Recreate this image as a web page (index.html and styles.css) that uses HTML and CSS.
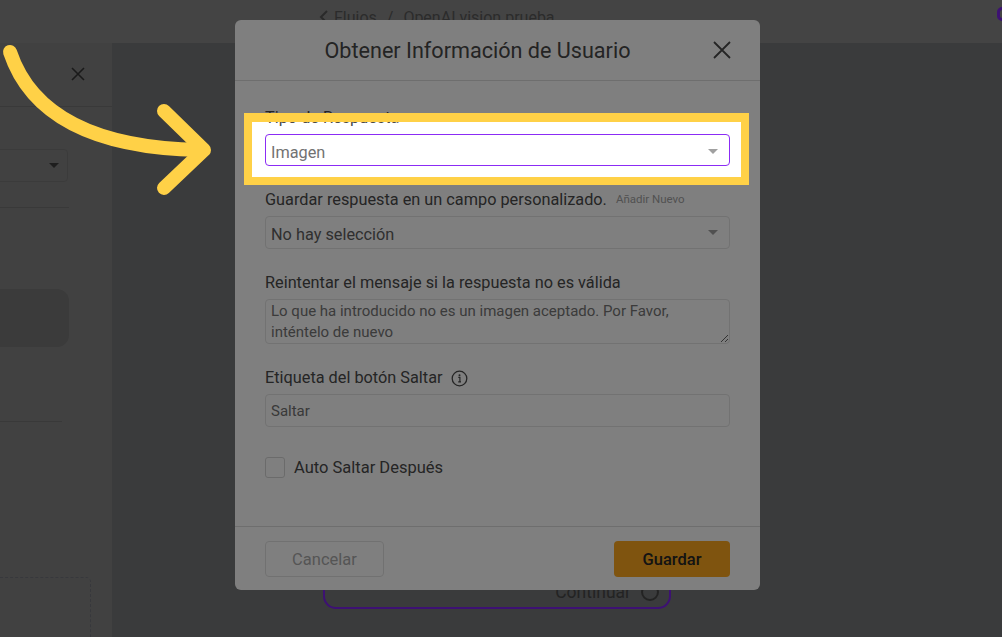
FILE: index.html
```html
<!DOCTYPE html>
<html lang="es">
<head>
<meta charset="utf-8">
<title>Obtener Información de Usuario</title>
<link rel="stylesheet" href="styles.css">
</head>
<body>
<div class="app">
  <header class="topbar">
    <nav class="crumbs">
      <svg class="crumb-back" width="10" height="16" viewBox="0 0 10 16"><path d="M8 2 L2 8 L8 14" fill="none" stroke="#555" stroke-width="2"/></svg>
      <span>Flujos</span>
      <span class="crumb-sep">/</span>
      <span>OpenAI vision prueba</span>
    </nav>
    <span class="top-icon"></span>
  </header>
  <div class="workspace">
    <aside class="panel">
      <div class="panel-head">
        <svg class="panel-close" width="14" height="14" viewBox="0 0 14 14"><path d="M1 1 L13 13 M13 1 L1 13" stroke="#343434" stroke-width="1.6"/></svg>
      </div>
      <div class="panel-select"><span class="caret dark"></span></div>
      <div class="panel-line"></div>
      <div class="panel-card"></div>
      <div class="panel-line short"></div>
      <div class="panel-dashed"></div>
    </aside>
    <main class="canvas">
      <div class="continue-btn">
        <span>Continuar</span>
        <span class="continue-dot"></span>
      </div>
    </main>
  </div>
</div>

<section class="modal">
  <div class="modal-header">
    <h2 class="modal-title">Obtener Información de Usuario</h2>
    <svg class="modal-close" width="18" height="18" viewBox="0 0 18 18"><path d="M1 1 L17 17 M17 1 L1 17" stroke="#4a4a4a" stroke-width="1.8"/></svg>
  </div>
  <div class="modal-body">
    <div class="field">
      <div class="field-label">Tipo de Respuesta</div>
      <div class="control active"><span class="value">Imagen</span><span class="caret"></span></div>
    </div>
    <div class="field">
      <div class="field-label">Guardar respuesta en un campo personalizado.<span class="add-new">Añadir Nuevo</span></div>
      <div class="control"><span class="value dark">No hay selección</span><span class="caret"></span></div>
    </div>
    <div class="field">
      <div class="field-label">Reintentar el mensaje si la respuesta no es válida</div>
      <textarea class="textarea" readonly>Lo que ha introducido no es un imagen aceptado. Por Favor, inténtelo de nuevo</textarea>
    </div>
    <div class="field">
      <div class="field-label">Etiqueta del botón Saltar
        <svg class="info" width="17" height="17" viewBox="0 0 17 17"><circle cx="8.5" cy="8.5" r="7.3" fill="none" stroke="#4a4a4a" stroke-width="1.3"/><circle cx="8.5" cy="5.2" r="1" fill="#4a4a4a"/><path d="M7.3 7.4 H8.9 V11.8 M7.2 11.9 H10" fill="none" stroke="#4a4a4a" stroke-width="1.2"/></svg>
      </div>
      <div class="control"><span class="value small">Saltar</span></div>
    </div>
    <label class="check-row"><span class="checkbox"></span><span>Auto Saltar Después</span></label>
  </div>
  <div class="modal-footer">
    <button class="btn btn-cancel">Cancelar</button>
    <button class="btn btn-save">Guardar</button>
  </div>
</section>

<div class="spotlight"></div>

<svg class="arrow" width="230" height="200" viewBox="0 0 230 200">
  <path d="M10 52 C 30 112, 90 148, 200 150" fill="none" stroke="#ffd147" stroke-width="14" stroke-linecap="round"/>
  <path d="M164 111 L204 150 L164 188" fill="none" stroke="#ffd147" stroke-width="14" stroke-linecap="round" stroke-linejoin="round"/>
</svg>
</body>
</html>
```
FILE: styles.css
```css
* { box-sizing: border-box; }

body {
  margin: 0;
  width: 1002px;
  height: 637px;
  overflow: hidden;
  position: relative;
  background: #747678;
  font-family: Roboto, "Noto Sans", sans-serif;
}

.app {
  display: flex;
  flex-direction: column;
  height: 637px;
}

.topbar {
  height: 43px;
  flex: none;
  background: #888888;
  display: flex;
  justify-content: space-between;
  padding: 5px 0 0 319px;
}

.crumbs {
  display: flex;
  align-items: center;
  height: 24px;
  gap: 5px;
  font-size: 16px;
  color: #575757;
}

.crumb-sep { margin: 0 5px; }

.top-icon {
  width: 10px;
  height: 14px;
  margin-top: 2px;
  margin-right: -5px;
  border: 3px solid #7a22e6;
  border-radius: 6px;
}

.workspace {
  flex: 1;
  display: flex;
}

.panel {
  width: 112px;
  flex: none;
  background: #838383;
  display: flex;
  flex-direction: column;
}

.panel-head {
  height: 64px;
  border-bottom: 1px solid #737373;
  position: relative;
}

.panel-close {
  position: absolute;
  left: 71px;
  top: 24px;
}

.panel-select {
  margin: 42px 44px 0 -20px;
  height: 33px;
  border: 1px solid #777;
  border-radius: 4px;
  display: flex;
  justify-content: flex-end;
  align-items: center;
  padding-right: 8px;
}

.panel-line {
  margin: 25px 43px 0 0;
  border-top: 1px solid #737373;
}

.panel-card {
  margin: 81px 43px 0 -20px;
  height: 58px;
  border-radius: 12px;
  background: #767676;
}

.panel-line.short {
  margin: 74px 50px 0 0;
}

.panel-dashed {
  margin: 155px 21px 0 -20px;
  flex: 1;
  border: 1px dashed #6e7078;
  border-bottom: none;
  border-radius: 5px 5px 0 0;
}

.canvas {
  flex: 1;
  position: relative;
}

.continue-btn {
  position: absolute;
  left: 211px;
  top: 522px;
  width: 348px;
  height: 44px;
  border: 2px solid #7a22e6;
  border-radius: 13px;
  display: flex;
  justify-content: flex-end;
  align-items: flex-end;
  gap: 10px;
  padding: 0 10px 4px 0;
  font-size: 17.5px;
  line-height: 22px;
  color: #474747;
}

.continue-dot {
  width: 18px;
  height: 18px;
  border: 2px solid #474747;
  border-radius: 50%;
  margin-bottom: 2px;
}

/* Modal */
.modal {
  position: absolute;
  left: 235px;
  top: 20px;
  width: 525px;
  height: 570px;
  background: #ffffff;
  border-radius: 6px;
  display: flex;
  flex-direction: column;
}

.modal-header {
  height: 61px;
  flex: none;
  border-bottom: 1px solid #dcdcdc;
  display: flex;
  align-items: center;
}

.modal-title {
  flex: 1;
  margin: 0;
  padding-left: 7px;
  text-align: center;
  font-size: 21.6px;
  font-weight: 400;
  color: #484848;
}

.modal-close {
  margin-right: 29px;
  flex: none;
}

.modal-body {
  flex: 1;
  padding: 26px 30px 0;
}

.field { margin-bottom: 23px; }

.field-label {
  display: flex;
  align-items: center;
  font-size: 16.3px;
  line-height: 22px;
  height: 22px;
  color: #4a4a4a;
  margin-bottom: 5px;
  white-space: nowrap;
}

.add-new {
  font-size: 11.5px;
  color: #a3a3a3;
  margin-left: 9px;
  margin-top: -2px;
}

.info { margin-left: 8px; }

.control {
  height: 33px;
  border: 1px solid #e4e4e4;
  border-radius: 4px;
  padding: 3px 11px 0 5px;
  display: flex;
  align-items: center;
  justify-content: space-between;
  font-size: 16.3px;
  color: #777;
}

.control .value { color: #727272; }
.control .value.dark { color: #5e5e5e; }
.control .value.small { font-size: 15px; margin-top: -2px; }

.control.active { border-color: #8b2cf5; height: 32px; padding-top: 5px; }

.caret {
  width: 0;
  height: 0;
  border-left: 5px solid transparent;
  border-right: 5px solid transparent;
  border-top: 5px solid #a0a0a0;
  margin-top: -3px;
}

.caret.dark { border-top-color: #3c3c3c; margin-top: 0; }

.textarea {
  display: block;
  width: 100%;
  height: 45px;
  margin: 0;
  border: 1px solid #e4e4e4;
  border-radius: 4px;
  padding: 1px 5px;
  font-family: Roboto, "Noto Sans", sans-serif;
  font-size: 15px;
  line-height: 21px;
  color: #767676;
  resize: vertical;
  overflow: hidden;
  outline: none;
}

.check-row {
  display: flex;
  align-items: center;
  gap: 9px;
  margin-top: 30px;
  font-size: 16.5px;
  color: #4a4a4a;
  height: 21px;
}

.checkbox {
  width: 20px;
  height: 21px;
  border: 1px solid #d6d6d6;
  border-radius: 3px;
  background: #fff;
}

.modal-footer {
  flex: none;
  border-top: 1px solid #dcdcdc;
  padding: 14px 30px 13px;
  display: flex;
  justify-content: space-between;
}

.btn {
  height: 36px;
  border-radius: 4px;
  font-family: Roboto, "Noto Sans", sans-serif;
  font-size: 16.5px;
  padding: 0;
}

.btn-cancel {
  width: 119px;
  background: #fff;
  border: 1px solid #e2e2e2;
  color: #ababab;
}

.btn-save {
  width: 116px;
  background: #ffa81e;
  border: none;
  color: #262626;
  font-weight: 500;
}

/* Tutorial overlay */
.spotlight {
  position: absolute;
  left: 244px;
  top: 113px;
  width: 505px;
  height: 72px;
  border: 8px solid #ffd147;
  border-top-width: 9px;
  box-shadow: 0 0 0 3000px rgba(0, 0, 0, 0.5);
  z-index: 5;
}

.arrow {
  position: absolute;
  left: 0;
  top: 0;
  z-index: 6;
}
```
